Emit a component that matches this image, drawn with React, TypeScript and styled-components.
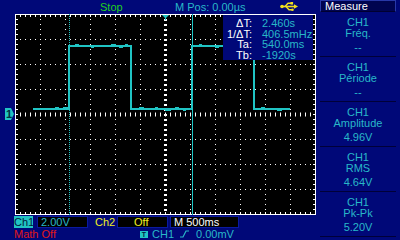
import styled, { createGlobalStyle } from 'styled-components'

const NAVY = '#000878'
const CYAN = '#28b8c8'
const TRACE = '#20c4c4'

const GlobalStyle = createGlobalStyle`
  html, body {
    margin: 0;
    padding: 0;
    background: ${NAVY};
  }
  body {
    font-family: 'Liberation Sans', Arial, sans-serif;
    font-size: 11px;
  }
`

type Measure = { label: string; value: string }

const measures: Measure[] = [
  { label: 'Fréq.', value: '--' },
  { label: 'Période', value: '--' },
  { label: 'Amplitude', value: '4.96V' },
  { label: 'RMS', value: '4.64V' },
  { label: 'Pk-Pk', value: '5.20V' }
]

const cursorRows = [
  { label: 'ΔT:', value: '2.460s' },
  { label: '1/ΔT:', value: '406.5mHz' },
  { label: 'Ta:', value: '540.0ms' },
  { label: 'Tb:', value: '-1920s' }
]

// grid sits at page (15,14), 12 x 8 divisions of 25px
const GRID_W = 300
const GRID_H = 200

const trace = [
  [18, 95], [54, 95], [54, 32], [116, 32], [116, 95],
  [177, 95], [177, 32], [239, 32], [239, 95], [275, 95]
]

const noise = [
  [40, 93, 4], [48, 93, 6], [60, 30, 4], [76, 33, 3], [96, 30, 5], [104, 33, 4], [110, 30, 3],
  [124, 93, 5], [140, 93, 3], [150, 96, 6], [160, 93, 4], [168, 96, 3], [184, 30, 3], [200, 33, 4],
  [246, 93, 4], [262, 96, 5]
]

function ScopeGrid() {
  const vLines = [1, 2, 3, 4, 5, 7, 8, 9, 10, 11]
  const hLines = [1, 2, 3, 5, 6, 7]

  return (
    <svg width={GRID_W + 1} height={GRID_H + 1} viewBox="0 0 301 201">
      <rect x="0" y="0" width="301" height="201" fill="#000" />

      {vLines.map(k => (
        <line key={`v${k}`} x1={k * 25 + 0.5} y1={0} x2={k * 25 + 0.5} y2={200} stroke="#fff" strokeDasharray="1 4" />
      ))}
      {hLines.map(k => (
        <line key={`h${k}`} x1={0} y1={k * 25 + 0.5} x2={300} y2={k * 25 + 0.5} stroke="#fff" strokeDasharray="1 4" />
      ))}

      {/* centre axes with minor ticks */}
      <line x1={0} y1={100.5} x2={300} y2={100.5} stroke="#fff" strokeWidth={4} strokeDasharray="1 4" />
      <line x1={150.5} y1={0} x2={150.5} y2={200} stroke="#fff" strokeWidth={3} strokeDasharray="2 3" />

      {/* edge ticks */}
      <line x1={0} y1={2} x2={300} y2={2} stroke="#fff" strokeWidth={2} strokeDasharray="1 4" />
      <line x1={0} y1={199} x2={300} y2={199} stroke="#fff" strokeWidth={2} strokeDasharray="1 4" />
      <line x1={2} y1={0} x2={2} y2={200} stroke="#fff" strokeWidth={2} strokeDasharray="1 4" />
      <line x1={299} y1={0} x2={299} y2={200} stroke="#fff" strokeWidth={2} strokeDasharray="1 4" />

      <rect x="0.5" y="0.5" width="300" height="200" fill="none" stroke="#fff" />

      {/* cursors */}
      <line x1={54.5} y1={0} x2={54.5} y2={201} stroke={TRACE} strokeDasharray="1 1" />
      <line x1={177.5} y1={0} x2={177.5} y2={201} stroke={TRACE} />

      {/* trigger position marker */}
      <polygon points="147,1 154,1 150.5,4.5" fill={TRACE} />
      <rect x="150" y="4" width="1" height="2" fill={TRACE} />

      <polyline
        points={trace.map(p => p.join(',')).join(' ')}
        fill="none"
        stroke={TRACE}
        strokeWidth={2}
      />
      {noise.map(([x, y, w], i) => (
        <rect key={i} x={x} y={y} width={w} height={1} fill={TRACE} />
      ))}
    </svg>
  )
}

function UsbIcon() {
  return (
    <svg width="18" height="9" viewBox="0 0 18 9">
      <circle cx="2" cy="4.5" r="1.8" fill="#f0e020" />
      <line x1="2" y1="4.5" x2="14" y2="4.5" stroke="#f0e020" strokeWidth="1.6" />
      <polyline points="5,4.5 8,1.2 11,1.2" fill="none" stroke="#f0e020" strokeWidth="1.4" />
      <rect x="10.5" y="0" width="2.6" height="2.6" fill="#f0e020" />
      <polyline points="6,4.5 9,7.8 12,7.8" fill="none" stroke="#f0e020" strokeWidth="1.4" />
      <circle cx="12.5" cy="7.7" r="1.3" fill="#f0e020" />
      <polygon points="14,2.3 18,4.5 14,6.7" fill="#f0e020" />
    </svg>
  )
}

function EdgeIcon() {
  return (
    <svg width="9" height="8" viewBox="0 0 9 8">
      <polyline points="0,7 3,7 6,1 9,1" fill="none" stroke={CYAN} strokeWidth="1.2" />
    </svg>
  )
}

export default function App() {
  return (
    <>
      <GlobalStyle />
      <Screen>
        <Main>
          <TopBar>
            <Status>Stop</Status>
            <TopText>M Pos: 0.00µs</TopText>
            <UsbSlot>
              <UsbIcon />
            </UsbSlot>
          </TopBar>

          <ScopeRow>
            <Gutter>
              <ChannelMarker>1</ChannelMarker>
            </Gutter>
            <Canvas>
              <ScopeGrid />
              <CursorBox>
                {cursorRows.map(row => (
                  <CursorRow key={row.label}>
                    <CursorLabel>{row.label}</CursorLabel>
                    <CursorValue>{row.value}</CursorValue>
                  </CursorRow>
                ))}
              </CursorBox>
            </Canvas>
          </ScopeRow>

          <StatusRow>
            <ChTag>Ch1</ChTag>
            <InfoBox width={51} pad={3} color={CYAN}>2.00V</InfoBox>
            <Ch2Label>Ch2</Ch2Label>
            <InfoBox width={51} pad={16} color="#f0f020">Off</InfoBox>
            <InfoBox width={69} pad={3} color="#fff">M 500ms</InfoBox>
          </StatusRow>

          <StatusRow>
            <MathLabel>Math Off</MathLabel>
            <TrigTag>T</TrigTag>
            <TrigText>CH1</TrigText>
            <EdgeSlot>
              <EdgeIcon />
            </EdgeSlot>
            <TrigText>0.00mV</TrigText>
          </StatusRow>
        </Main>

        <Side>
          <MenuTitle>Measure</MenuTitle>
          {measures.map(m => (
            <MeasureItem key={m.label}>
              <MeasureLine>CH1</MeasureLine>
              <MeasureLine>{m.label}</MeasureLine>
              <MeasureValue>{m.value}</MeasureValue>
            </MeasureItem>
          ))}
        </Side>
      </Screen>
    </>
  )
}

const Screen = styled.div`
  width: 400px;
  height: 240px;
  background: ${NAVY};
  display: flex;
  flex-direction: row;
  overflow: hidden;
`

const Main = styled.div`
  width: 320px;
  display: flex;
  flex-direction: column;
`

const TopBar = styled.div`
  height: 14px;
  display: flex;
  align-items: center;
  padding-left: 100px;
  line-height: 14px;
`

const Status = styled.span`
  color: #20d020;
  width: 75px;
`

const TopText = styled.span`
  color: ${CYAN};
  width: 105px;
`

const UsbSlot = styled.span`
  display: flex;
  align-items: center;
  height: 14px;
  padding-bottom: 2px;
  box-sizing: border-box;
`

const ScopeRow = styled.div`
  height: 202px;
  display: flex;
  flex-direction: row;
`

const Gutter = styled.div`
  width: 15px;
  position: relative;
`

const ChannelMarker = styled.div`
  position: absolute;
  left: 5px;
  top: 94px;
  width: 9px;
  height: 12px;
  background: ${TRACE};
  color: #003040;
  font-size: 11px;
  font-weight: bold;
  line-height: 12px;
  padding-left: 1px;
  box-sizing: border-box;
  clip-path: polygon(0 0, 6px 0, 9px 6px, 6px 12px, 0 12px);
`

const Canvas = styled.div`
  position: relative;
  width: 301px;
  height: 201px;

  svg {
    display: block;
  }
`

const CursorBox = styled.div`
  position: absolute;
  left: 208px;
  top: 1px;
  width: 90px;
  height: 45px;
  background: ${NAVY};
  padding-top: 3px;
  box-sizing: border-box;
  display: flex;
  flex-direction: column;
`

const CursorRow = styled.div`
  display: grid;
  grid-template-columns: 29px 1fr;
  column-gap: 10px;
  height: 10.5px;
  line-height: 10.5px;
  white-space: nowrap;
`

const CursorLabel = styled.span`
  color: #fff;
  text-align: right;
`

const CursorValue = styled.span`
  color: ${CYAN};
`

const StatusRow = styled.div`
  height: 12px;
  display: flex;
  align-items: center;
  padding-left: 14px;
  line-height: 12px;
  white-space: nowrap;
`

const ChTag = styled.span`
  width: 19px;
  height: 12px;
  background: ${TRACE};
  color: #002040;
  text-align: center;
  margin-right: 4px;
`

const InfoBox = styled.span<{ width: number; pad: number; color: string }>`
  width: ${({ width }) => width}px;
  height: 12px;
  box-sizing: border-box;
  padding-left: ${({ pad }) => pad}px;
  background: #000;
  border: 1px solid #0a1aa0;
  line-height: 10px;
  color: ${({ color }) => color};
  margin-right: 2px;
`

const Ch2Label = styled.span`
  color: #f0f020;
  margin-left: 5px;
  width: 22px;
`

const MathLabel = styled.span`
  color: #e01818;
  width: 126px;
`

const TrigTag = styled.span`
  width: 8px;
  height: 7px;
  background: ${TRACE};
  color: #002040;
  font-size: 7px;
  line-height: 7px;
  text-align: center;
  font-weight: bold;
  margin-right: 4px;
`

const TrigText = styled.span`
  color: ${CYAN};
`

const EdgeSlot = styled.span`
  display: flex;
  margin: 0 7px 0 6px;
`

const Side = styled.div`
  width: 76px;
  display: flex;
  flex-direction: column;
`

const MenuTitle = styled.div`
  height: 12px;
  box-sizing: border-box;
  border: 1px solid #2838a8;
  border-bottom-color: #000030;
  background: #000450;
  color: #fff;
  padding-left: 4px;
  line-height: 11px;
`

const MeasureItem = styled.div`
  height: 45px;
  box-sizing: border-box;
  border-bottom: 1px solid #000038;
  padding-top: 5px;
  display: flex;
  flex-direction: column;
  align-items: center;
  color: ${CYAN};
`

const MeasureLine = styled.div`
  line-height: 11px;
  height: 11px;
`

const MeasureValue = styled.div`
  line-height: 11px;
  height: 11px;
  margin-top: 3px;
`
